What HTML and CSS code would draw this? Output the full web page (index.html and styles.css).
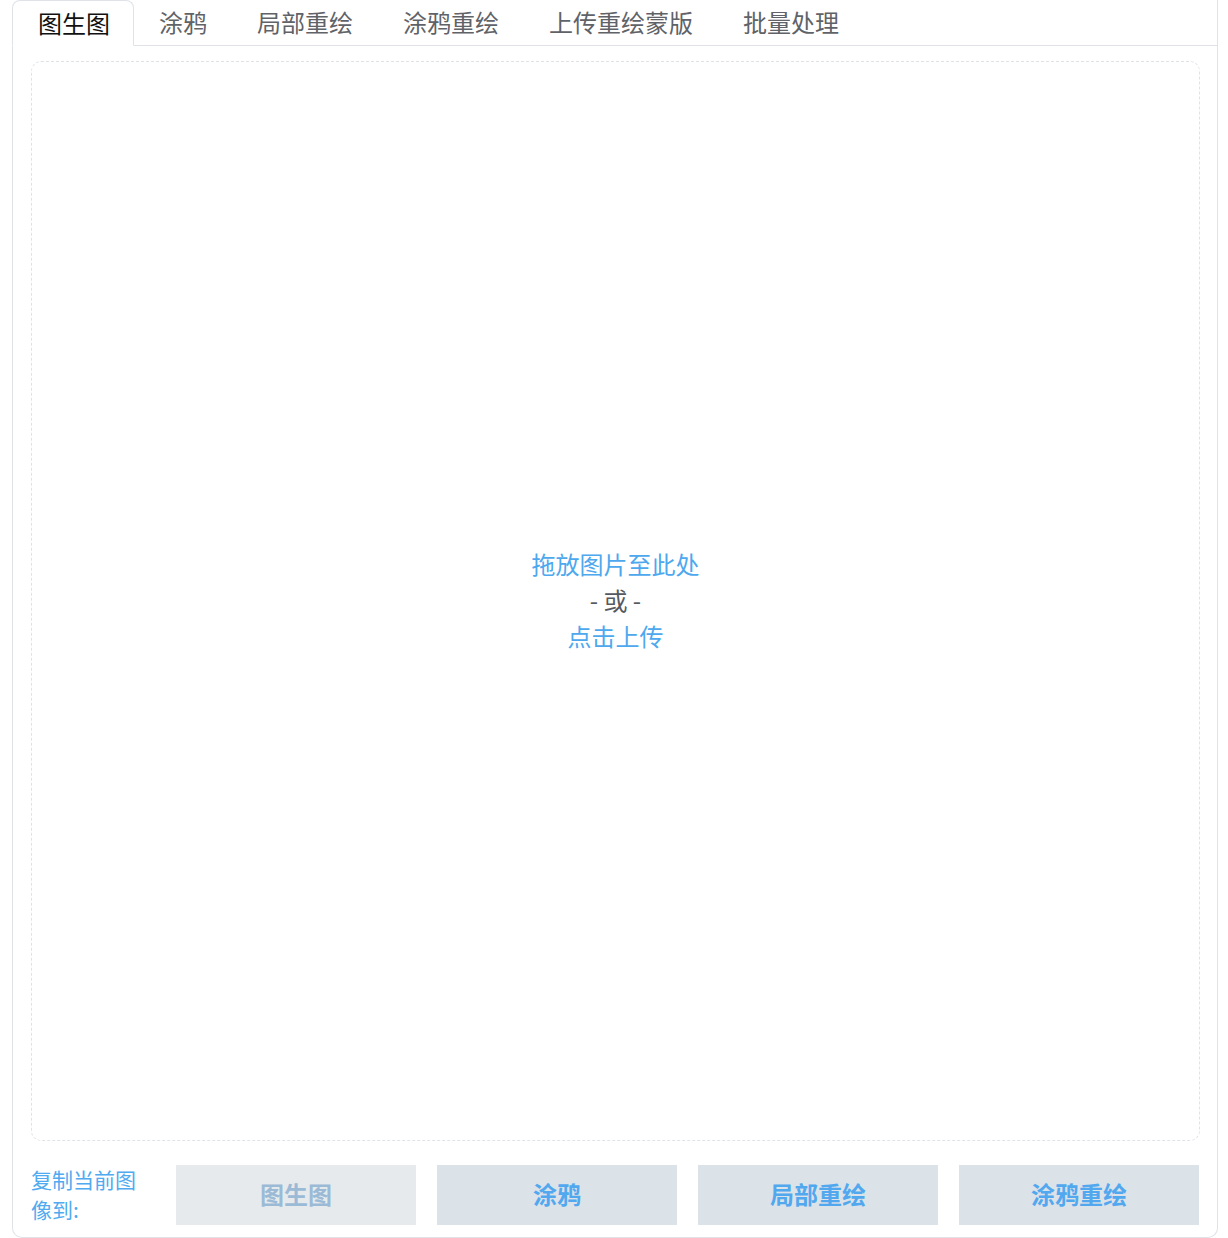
FILE: index.html
```html
<!DOCTYPE html>
<html lang="zh-CN">
<head>
<meta charset="utf-8">
<title>图生图</title>
<link rel="stylesheet" href="styles.css">
</head>
<body>
<div class="wrap">
  <div class="tabs">
    <div class="tab active">图生图</div>
    <div class="tab">涂鸦</div>
    <div class="tab">局部重绘</div>
    <div class="tab">涂鸦重绘</div>
    <div class="tab">上传重绘蒙版</div>
    <div class="tab">批量处理</div>
    <div class="tab-fill"></div>
  </div>
  <div class="panel">
    <div class="drop">
      <div class="drop-text">
        <div class="link">拖放图片至此处</div>
        <div class="or">- 或 -</div>
        <div class="link">点击上传</div>
      </div>
    </div>
    <div class="copy-row">
      <div class="copy-label">复制当前图像到:</div>
      <button class="btn disabled">图生图</button>
      <button class="btn">涂鸦</button>
      <button class="btn">局部重绘</button>
      <button class="btn">涂鸦重绘</button>
    </div>
  </div>
</div>
</body>
</html>
```

FILE: styles.css
```css
html, body {
  margin: 0;
  padding: 0;
  background: #ffffff;
}

body {
  font-family: "Noto Sans CJK SC", "Noto Sans", sans-serif;
}

.wrap {
  width: 1206px;
  margin-left: 12px;
}

.tabs {
  display: flex;
  height: 46px;
}

.tab {
  box-sizing: border-box;
  height: 46px;
  padding: 0 25px;
  font-size: 24px;
  line-height: 43px;
  color: #5f6368;
  border-bottom: 1px solid #dfe3e8;
  white-space: nowrap;
}

.tab.active {
  padding: 0 23px 0 25px;
  color: #111111;
  border: 1px solid #dfe3e8;
  border-bottom: 1px solid #ffffff;
  border-radius: 8px 8px 0 0;
}

.tab-fill {
  flex: 1;
  border-bottom: 1px solid #dfe3e8;
  border-right: 1px solid #dfe3e8;
  box-sizing: border-box;
  height: 46px;
}

.panel {
  box-sizing: border-box;
  border: 1px solid #dfe3e8;
  border-top: none;
  border-radius: 0 0 10px 10px;
  padding: 15px 17px 12px 18px;
  height: 1192px;
}

.drop {
  box-sizing: border-box;
  height: 1080px;
  border: 1px dashed #dfe3e8;
  border-radius: 10px;
  display: flex;
  align-items: center;
  justify-content: center;
}

.drop-text {
  text-align: center;
  font-size: 24px;
  line-height: 36px;
  padding-bottom: 2px;
}

.link {
  color: #4da8ee;
}

.or {
  color: #555a60;
}

.copy-row {
  margin-top: 23px;
  display: flex;
  align-items: center;
  gap: 21px;
}

.copy-label {
  width: 124px;
  font-size: 21px;
  line-height: 30px;
  color: #4faaf0;
  padding-bottom: 2px;
}

.btn {
  width: 240px;
  height: 60px;
  border: none;
  border-radius: 0;
  background: #dbe2e8;
  color: #52a8ee;
  font-family: "Noto Sans CJK SC", "Noto Sans", sans-serif;
  font-size: 24px;
  line-height: 58px;
  font-weight: bold;
  padding: 0 0 2px 0;
  cursor: pointer;
}

.btn.disabled {
  background: #e6eaec;
  color: #9bbad6;
}
```
